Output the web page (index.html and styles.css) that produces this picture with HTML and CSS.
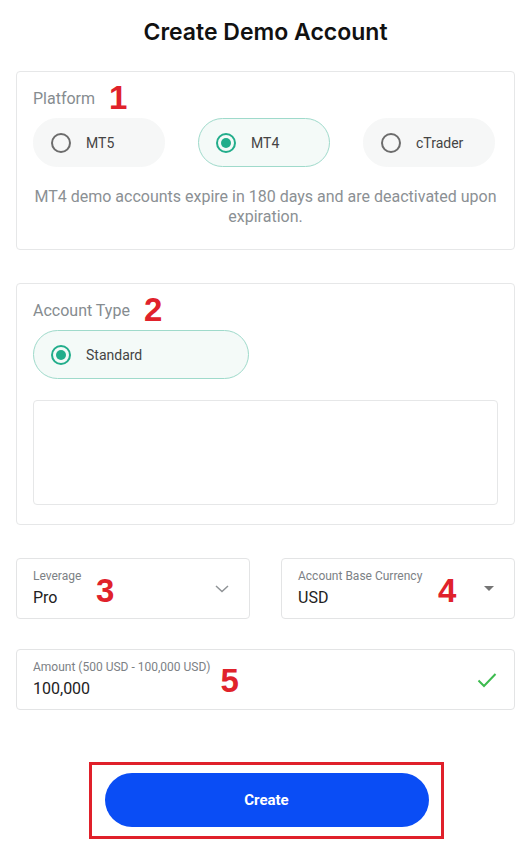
FILE: index.html
```html
<!DOCTYPE html>
<html lang="en">
<head>
  <meta charset="UTF-8">
  <title>Create Demo Account</title>
  <link rel="stylesheet" href="styles.css">
</head>
<body>
  <div class="page">
    <h1>Create Demo Account</h1>

    <section class="card platform">
      <div class="card-title">Platform <span class="mark">1</span></div>
      <div class="options">
        <label class="pill"><span class="radio"></span>MT5</label>
        <label class="pill selected"><span class="radio"></span>MT4</label>
        <label class="pill"><span class="radio"></span>cTrader</label>
      </div>
      <p class="note">MT4 demo accounts expire in 180 days and are deactivated upon expiration.</p>
    </section>

    <section class="card account">
      <div class="card-title">Account Type <span class="mark">2</span></div>
      <label class="pill wide selected"><span class="radio"></span>Standard</label>
      <div class="details"></div>
    </section>

    <div class="row">
      <div class="field">
        <div class="field-body">
          <div class="field-label">Leverage</div>
          <div class="field-value">Pro</div>
        </div>
        <span class="mark m3">3</span>
        <svg class="chevron" width="14" height="8" viewBox="0 0 14 8"><path d="M1 1l6 5.5L13 1" fill="none" stroke="#8f9396" stroke-width="1.5"/></svg>
      </div>
      <div class="field">
        <div class="field-body">
          <div class="field-label">Account Base Currency</div>
          <div class="field-value">USD</div>
        </div>
        <span class="mark m4">4</span>
        <svg class="caret" width="10" height="5" viewBox="0 0 10 5"><path d="M0 0h10L5 5z" fill="#757575"/></svg>
      </div>
    </div>

    <div class="field amount">
      <div class="field-body">
        <div class="field-label">Amount (500 USD - 100,000 USD) <span class="mark m5">5</span></div>
        <div class="field-value">100,000</div>
      </div>
      <svg class="check" width="20" height="16" viewBox="0 0 20 16"><path d="M1.5 8.5l5.5 5.5L18.5 2" fill="none" stroke="#3dbb4f" stroke-width="2"/></svg>
    </div>

    <div class="submit">
      <div class="highlight">
        <button type="button">Create</button>
      </div>
    </div>
  </div>
</body>
</html>
```

FILE: styles.css
```css
body {
  margin: 0;
  font-family: Roboto, "Liberation Sans", sans-serif;
  background: #fff;
  color: #222;
}

.page {
  width: 499px;
  margin-left: 16px;
  padding-top: 17px;
}

h1 {
  margin: 0 0 24px;
  text-align: center;
  font-size: 23px;
  font-weight: 600;
  font-family: Inter, Roboto, sans-serif;
  color: #111;
  line-height: 30px;
}

.card {
  border: 1px solid #e6e7e8;
  border-radius: 4px;
  padding: 11px 16px 0;
  box-sizing: border-box;
}

.platform {
  height: 179px;
  margin-bottom: 33px;
}

.account {
  height: 242px;
  margin-bottom: 33px;
}

.card-title {
  height: 30px;
  font-size: 16px;
  color: #868c90;
  display: flex;
  align-items: center;
}

.mark {
  font-family: "Liberation Sans", sans-serif;
  font-weight: bold;
  font-size: 33px;
  color: #e0222b;
  line-height: 30px;
  margin-left: 14px;
}

.options {
  display: flex;
  gap: 33px;
  margin-top: 5px;
}

.pill {
  width: 132px;
  height: 49px;
  box-sizing: border-box;
  border-radius: 25px;
  background: #f6f7f7;
  border: 1px solid #f6f7f7;
  display: flex;
  align-items: center;
  padding-left: 17px;
  font-size: 14px;
  color: #444;
}

.pill.selected {
  background: #f4faf8;
  border-color: #9fdacb;
}

.pill.wide {
  width: 216px;
  margin-top: 5px;
}

.radio {
  width: 20px;
  height: 20px;
  box-sizing: border-box;
  border: 2px solid #6c6c6c;
  border-radius: 50%;
  margin-right: 15px;
  position: relative;
}

.selected .radio {
  border-color: #22ad8b;
}

.selected .radio::after {
  content: "";
  position: absolute;
  left: 3px;
  top: 3px;
  width: 10px;
  height: 10px;
  border-radius: 50%;
  background: #22ad8b;
}

.note {
  margin: 20px 0 0;
  text-align: center;
  font-size: 16px;
  line-height: 20px;
  color: #8b9094;
}

.details {
  margin-top: 21px;
  height: 103px;
  border: 1px solid #e6e7e8;
  border-radius: 4px;
}

.row {
  display: flex;
  justify-content: space-between;
  margin-bottom: 30px;
}

.field {
  width: 234px;
  height: 61px;
  box-sizing: border-box;
  border: 1px solid #e3e4e5;
  border-radius: 4px;
  display: flex;
  align-items: center;
  padding: 0 16px;
  position: relative;
}

.field-body {
  flex: 1;
}

.field-label {
  font-size: 12px;
  color: #7c8185;
  line-height: 16px;
  display: flex;
  align-items: center;
}

.field-value {
  font-size: 16px;
  color: #222;
  line-height: 22px;
  margin-top: 3px;
}

.field .mark {
  position: absolute;
  top: 17px;
}

.m3 {
  left: 65px;
}

.m4 {
  left: 142px;
}

.m5 {
  position: static !important;
  margin-left: 10px;
  height: 16px;
  transform: translateY(7px);
}

.chevron {
  margin-right: 4px;
}

.caret {
  margin-right: 4px;
}

.field.amount {
  width: 499px;
}

.check {
  margin-right: 1px;
}

.submit {
  display: flex;
  justify-content: center;
  padding-top: 52px;
}

.highlight {
  border: 3px solid #e0202a;
  padding: 8px 13px 9px;
  margin-left: 17px;
  margin-right: 16px;
  width: 355px;
  box-sizing: border-box;
}

button {
  display: block;
  width: 324px;
  height: 54px;
  border: none;
  border-radius: 27px;
  background: #0a4df5;
  color: #fff;
  font-family: Roboto, sans-serif;
  font-weight: bold;
  font-size: 15px;
}
```
